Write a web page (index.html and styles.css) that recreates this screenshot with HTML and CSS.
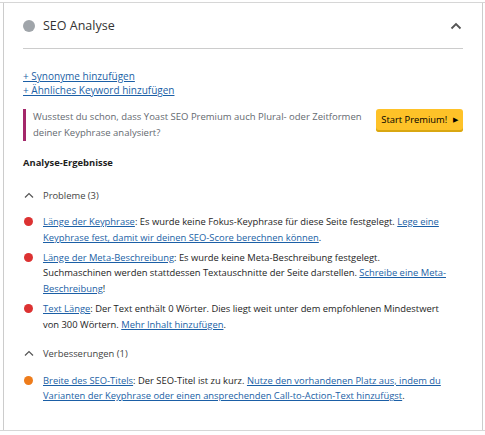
FILE: index.html
```html
<!DOCTYPE html>
<html lang="de">
<head>
    <meta charset="UTF-8">
    <title>SEO Analyse</title>
    <link rel="stylesheet" href="styles.css">
</head>
<body>
    <div class="rule"></div>
    <div class="panel">
        <div class="panel-header">
            <span class="score-dot"></span>
            <h2 class="panel-title">SEO Analyse</h2>
            <svg class="toggle" width="12" height="8" viewBox="0 0 12 8"><path d="M1.5 6.5 L6 2 L10.5 6.5" fill="none" stroke="#555" stroke-width="1.8"/></svg>
        </div>

        <div class="panel-body">
            <div class="add-links">
                <a href="#">+ Synonyme hinzufügen</a><br>
                <a href="#">+ Ähnliches Keyword hinzufügen</a>
            </div>

            <div class="upsell">
                <p class="upsell-text">Wusstest du schon, dass Yoast SEO Premium auch Plural- oder Zeitformen deiner Keyphrase analysiert?</p>
                <button class="premium-btn">Start Premium! <span class="arrow">&#9654;</span></button>
            </div>

            <h3 class="results-title">Analyse-Ergebnisse</h3>

            <div class="group-head first">
                <svg width="10" height="7" viewBox="0 0 10 7"><path d="M1 5.5 L5 1.5 L9 5.5" fill="none" stroke="#555" stroke-width="1.2"/></svg>
                <span>Probleme (3)</span>
            </div>
            <ul class="results">
                <li><span class="bullet bad"></span><p><a href="#">Länge der Keyphrase</a>: Es wurde keine Fokus-Keyphrase für diese Seite festgelegt. <a href="#">Lege eine Keyphrase fest, damit wir deinen SEO-Score berechnen können</a>.</p></li>
                <li><span class="bullet bad"></span><p><a href="#">Länge der Meta-Beschreibung</a>: Es wurde keine Meta-Beschreibung festgelegt. Suchmaschinen werden stattdessen Textauschnitte der Seite darstellen. <a href="#">Schreibe eine Meta-Beschreibung</a>!</p></li>
                <li><span class="bullet bad"></span><p><a href="#">Text Länge</a>: Der Text enthält 0 Wörter. Dies liegt weit unter dem empfohlenen Mindestwert von 300 Wörtern. <a href="#">Mehr Inhalt hinzufügen</a>.</p></li>
            </ul>

            <div class="group-head">
                <svg width="10" height="7" viewBox="0 0 10 7"><path d="M1 5.5 L5 1.5 L9 5.5" fill="none" stroke="#555" stroke-width="1.2"/></svg>
                <span>Verbesserungen (1)</span>
            </div>
            <ul class="results">
                <li><span class="bullet ok"></span><p><a href="#">Breite des SEO-Titels</a>: Der SEO-Titel ist zu kurz. <a href="#">Nutze den vorhandenen Platz aus, indem du Varianten der Keyphrase oder einen ansprechenden Call-to-Action-Text hinzufügst</a>.</p></li>
            </ul>
        </div>
    </div>
    <div class="rule"></div>
</body>
</html>
```

FILE: styles.css
```css
body {
    margin: 0;
    padding-top: 2px;
    font-family: "Open Sans", Arial, sans-serif;
    font-size: 10px;
    color: #1e1e1e;
    background: #fff;
}

a {
    color: #1b5fa6;
    text-decoration: underline;
}

.rule {
    border-top: 1px solid #d6d6d6;
}

.panel {
    margin: 0 2px 0 3px;
    border-left: 1px solid #ccc;
    border-right: 1px solid #ccc;
    height: 427px;
}

.panel-header {
    display: flex;
    align-items: center;
    margin: 0 19px;
    height: 45px;
    border-bottom: 1px solid #ccc;
}

.score-dot {
    width: 12px;
    height: 12px;
    border-radius: 50%;
    background: #a0a5aa;
    margin-right: 8px;
}

.panel-title {
    flex: 1;
    margin: 0;
    font-size: 12.5px;
    font-weight: normal;
    color: #333;
}

.toggle {
    margin-right: 1px;
}

.panel-body {
    padding: 0 19px;
}

.add-links {
    margin-top: 20px;
    line-height: 14px;
}

.upsell {
    display: flex;
    align-items: flex-start;
    margin-top: 12px;
}

.upsell-text {
    flex: 1;
    margin: 0;
    padding-left: 7px;
    border-left: 3px solid #a4286a;
    color: #646970;
    font-size: 9.5px;
    line-height: 16px;
}

.premium-btn {
    margin-left: 6px;
    width: 87px;
    height: 23px;
    padding: 0 0 2px;
    border: none;
    border-radius: 3px;
    background: #fec228;
    box-shadow: inset 0 -2px 0 #d9a711;
    font-family: inherit;
    font-size: 9.4px;
    color: #000;
    white-space: nowrap;
}

.premium-btn .arrow {
    font-size: 7px;
    margin-left: 3px;
    vertical-align: 1px;
}

.results-title {
    margin: 15px 0 0;
    font-size: 9.4px;
    line-height: 14px;
    font-weight: bold;
}

.group-head {
    display: flex;
    align-items: center;
    gap: 9px;
    height: 14px;
    margin-top: 14px;
    padding-left: 1px;
    font-size: 9.4px;
    color: #444;
}

.group-head.first {
    margin-top: 18px;
}

.results {
    list-style: none;
    margin: 12px 0 0;
    padding: 0;
    font-size: 9.4px;
}

.results li {
    display: flex;
}

.results li + li {
    margin-top: 4px;
}

.results p {
    margin: 0;
    padding-right: 16px;
    line-height: 15.8px;
}

.bullet {
    flex: none;
    width: 9px;
    height: 9px;
    border-radius: 50%;
    margin: 3px 10px 0 1px;
}

.bad {
    background: #dc3232;
}

.ok {
    background: #ee7c1b;
}
```
